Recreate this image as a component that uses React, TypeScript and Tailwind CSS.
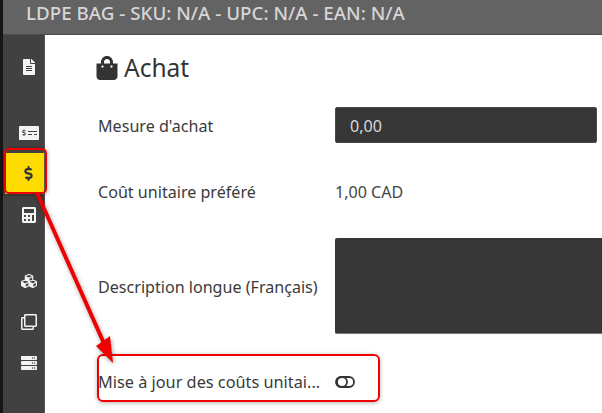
import { FaCalculator, FaCubes, FaDollarSign, FaFileAlt, FaMoneyCheckAlt, FaRegClone, FaServer, FaShoppingBag } from "react-icons/fa"

const NavItem = ({ children, active }: { children: React.ReactNode; active?: boolean }) => (
    <div className={active ? "h-[41px] ml-[2px] flex items-center justify-center pl-[8px] bg-[#ffdc00] text-[#333333]" : "h-[41px] flex items-center justify-center pl-[10px] text-[#f4f4f4]"}>
        {children}
    </div>
)

const ToggleIcon = () => (
    <svg width="20" height="12" viewBox="0 0 20 12" fill="none" stroke="#333333" strokeWidth="1.8">
        <rect x="1" y="1" width="18" height="10" rx="5" />
        <circle cx="7" cy="6" r="5" />
    </svg>
)

export default function App() {
    return (
        <div className="relative flex w-[602px] h-[413px] overflow-hidden bg-white text-[#3a3a3a] text-[16.1px]" style={{ fontFamily: '"Noto Sans", sans-serif' }}>
            <div className="w-[3px] bg-[#161616]" />

            <div className="flex flex-col flex-1 min-w-0">
                <div className="h-[35px] shrink-0 flex items-center pl-[23px] pb-[7px] bg-[#636363] border-b border-[#4c4c4c] text-[#d6d6d6] text-[18.8px] font-medium whitespace-nowrap">
                    LDPE BAG - SKU: N/A - UPC: N/A - EAN: N/A
                </div>

                <div className="flex flex-1 min-h-0">
                    <div className="w-[42px] shrink-0 flex flex-col gap-[25px] pt-[11px] bg-[#414141] border-r border-[#555555]">
                        <div>
                            <NavItem><FaFileAlt size={16} /></NavItem>
                        </div>
                        <div>
                            <NavItem><FaMoneyCheckAlt size={20} /></NavItem>
                            <NavItem active><FaDollarSign size={15} /></NavItem>
                            <NavItem><FaCalculator size={16} /></NavItem>
                        </div>
                        <div>
                            <NavItem><FaCubes size={16} /></NavItem>
                            <NavItem><FaRegClone size={16} /></NavItem>
                            <NavItem><FaServer size={16} /></NavItem>
                        </div>
                    </div>

                    <div className="flex-1 min-w-0 pl-[52px] overflow-hidden">
                        <div className="flex items-center gap-[5px] h-[28px] mt-[19px] text-[#333333] text-[24.5px]">
                            <FaShoppingBag size={24} className="shrink-0 -ml-[2px]" />
                            Achat
                        </div>

                        <div className="flex items-center h-[36px] mt-[25px]">
                            <div className="w-[238px] shrink-0 pl-[1px] pt-[2px] whitespace-nowrap">Mesure d'achat</div>
                            <div className="w-[262px] shrink-0 h-full flex items-center pl-[14px] pt-[3px] bg-[#363636] rounded-[2px] border border-[#4a4a4a] text-[#d8d8d8]">0,00</div>
                        </div>

                        <div className="flex items-center h-[22px] mt-[38px]">
                            <div className="w-[238px] shrink-0 pl-[1px] whitespace-nowrap">Coût unitaire préféré</div>
                            <div className="text-[#444444] whitespace-nowrap">1,00 CAD</div>
                        </div>

                        <div className="flex items-center h-[96px] mt-[35px]">
                            <div className="w-[238px] shrink-0 pl-[1px] pt-[2px] whitespace-nowrap">Description longue (Français)</div>
                            <div className="w-[300px] shrink-0 h-full bg-[#363636] rounded-[2px] border-b border-[#777777]" />
                        </div>

                        <div className="h-[16px] pl-[528px] mt-[4px] text-[#555555] text-[12px] leading-[16px] whitespace-nowrap">(0/100)</div>

                        <div className="flex items-center gap-[15px] h-[22px] mt-[17px] pl-[1px]">
                            <div className="w-[222px] text-[16.3px] whitespace-nowrap">Mise à jour des coûts unitai...</div>
                            <ToggleIcon />
                        </div>
                    </div>
                </div>
            </div>

            {/* annotations over the page */}
            <div className="absolute left-[4px] top-[148px] w-[43px] h-[46px] rounded-[5px] border-2 border-[#f00000] shadow-[0_1px_4px_rgba(0,0,0,0.4)]" />
            <div className="absolute left-[97px] top-[354px] w-[283px] h-[48px] rounded-[6px] border-2 border-[#f00000] shadow-[0_1px_4px_rgba(0,0,0,0.3)]" />
            <svg className="absolute left-0 top-0" width="602" height="413" viewBox="0 0 602 413" fill="#f00000" stroke="none">
                <g style={{ filter: "drop-shadow(1px 2px 2px rgba(0,0,0,0.35))" }}>
                    <path d="M35.5 194 L39 192.6 L106 343 L102.3 344.6 Z" />
                    <path d="M96 346 L110 336 L113 363 Z" />
                </g>
            </svg>
        </div>
    )
}
